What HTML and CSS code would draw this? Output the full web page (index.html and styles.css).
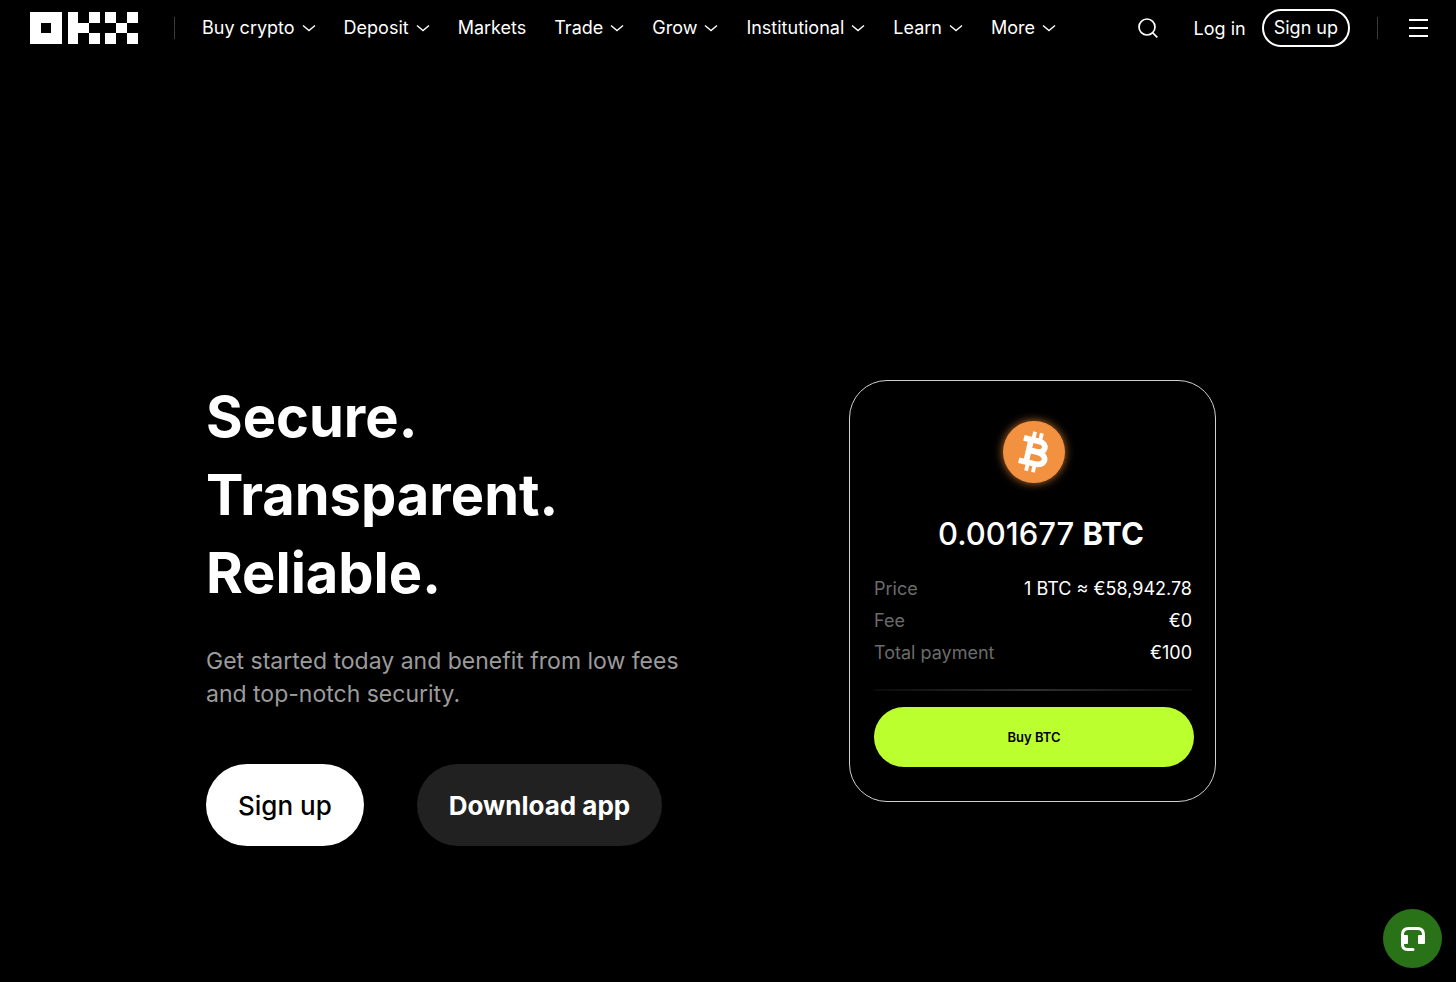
FILE: index.html
```html
<!DOCTYPE html>
<html lang="en">
<head>
  <meta charset="UTF-8">
  <meta name="viewport" content="width=device-width, initial-scale=1.0">
  <title>OKX</title>
  <link rel="stylesheet" href="styles.css">
</head>
<body>
  <svg width="0" height="0" class="symbols" aria-hidden="true">
    <symbol id="chevron" viewBox="0 0 14 14">
      <path d="M1 4.500 L7 9.500 L13 4.500" fill="none" stroke="currentColor" stroke-width="1.400"/>
    </symbol>
  </svg>

  <header class="header">
    <a href="#" class="logo" aria-label="OKX">
      <svg viewBox="0 0 108 32" width="108" height="32" fill="#fff" shape-rendering="crispEdges">
        <path fill-rule="evenodd" d="M0 0h32v32H0z M11 11v10h10V11z"/>
        <path d="M38 0h10v11h11v10H48v11H38z M59 0h11v11H59z M59 21h11v11H59z"/>
        <path d="M75 0h11v11H75z M97 0h11v11H97z M86 11h11v10H86z M75 21h11v11H75z M97 21h11v11H97z"/>
      </svg>
    </a>
    <span class="divider"></span>
    <nav class="nav">
      <button type="button" class="nav-item">Buy crypto <svg class="chevron"><use href="#chevron"/></svg></button>
      <button type="button" class="nav-item">Deposit <svg class="chevron"><use href="#chevron"/></svg></button>
      <a href="#" class="nav-item">Markets</a>
      <button type="button" class="nav-item">Trade <svg class="chevron"><use href="#chevron"/></svg></button>
      <button type="button" class="nav-item">Grow <svg class="chevron"><use href="#chevron"/></svg></button>
      <button type="button" class="nav-item">Institutional <svg class="chevron"><use href="#chevron"/></svg></button>
      <button type="button" class="nav-item">Learn <svg class="chevron"><use href="#chevron"/></svg></button>
      <button type="button" class="nav-item">More <svg class="chevron"><use href="#chevron"/></svg></button>
    </nav>
    <div class="actions">
      <button type="button" class="icon-btn search" aria-label="Search">
        <svg viewBox="0 0 20 20" width="20" height="20" fill="none" stroke="#fff" stroke-width="1.700">
          <circle cx="9" cy="9" r="8"/>
          <path d="M14.800 14.800 L19.300 19.300"/>
        </svg>
      </button>
      <a href="#" class="login">Log in</a>
      <a href="#" class="signup">Sign up</a>
      <span class="divider"></span>
      <button type="button" class="icon-btn menu" aria-label="Menu">
        <svg viewBox="0 0 20 20" width="20" height="20" fill="#fff">
          <path d="M1 1h19v2H1z M1 9h19v2H1z M1 17h19v2H1z"/>
        </svg>
      </button>
    </div>
  </header>

  <main class="hero">
    <section class="intro">
      <h1>Secure.<br>Transparent.<br>Reliable.</h1>
      <p>Get started today and benefit from low fees<br>and top-notch security.</p>
      <div class="cta">
        <button type="button" class="btn btn-light">Sign up</button>
        <button type="button" class="btn btn-dark">Download app</button>
      </div>
    </section>

    <section class="card">
      <div class="coin">
        <svg viewBox="0 0 62 62" width="62" height="62" aria-hidden="true">
          <g transform="rotate(13 31 31)" fill="none" stroke="#fff">
            <path d="M18 19.500 H33.500 C43 19.500 43 30.300 33.500 30.300 H26 M33.500 30.300 C46 30.300 46 42.500 34.500 42.500 H18 M25.500 19.500 V42.500" stroke-width="5.800"/>
            <path d="M27.500 11v8 M34.500 11v8 M27.500 43v8 M34.500 43v8" stroke-width="3.800"/>
          </g>
        </svg>
      </div>
      <div class="amount">0.001677 <b>BTC</b></div>
      <dl class="details">
        <div><dt>Price</dt><dd>1 BTC ≈ €58,942.78</dd></div>
        <div><dt>Fee</dt><dd>€0</dd></div>
        <div><dt>Total payment</dt><dd>€100</dd></div>
      </dl>
      <button type="button" class="buy">Buy BTC</button>
    </section>
  </main>

  <button type="button" class="support" aria-label="Support">
    <svg viewBox="0 0 26 26" width="26" height="26" aria-hidden="true">
      <path d="M2.500 10 V8.500 Q2.500 2.500 8.500 2.500 H17.500 Q23.500 2.500 23.500 8.500 V10 M2.500 16 V18.500 Q2.500 23.500 7.500 23.500 H13" fill="none" stroke="#fff" stroke-width="3" stroke-linecap="round"/>
      <path d="M1 9h6q1 0 1 1v7q0 1-1 1H1z M19 9h6v8q0 1-1 1h-5q-1 0-1-1v-7q0-1 1-1z" fill="#fff"/>
    </svg>
  </button>
</body>
</html>
```
FILE: styles.css
```css
* {
  box-sizing: border-box;
}

body {
  margin: 0;
  min-height: 100vh;
  background: #000;
  color: #fff;
  font-family: Inter, "Liberation Sans", sans-serif;
}

button {
  padding: 0;
  border: none;
  background: none;
  color: inherit;
  font-family: inherit;
  cursor: pointer;
}

a {
  color: inherit;
  text-decoration: none;
}

.symbols {
  position: absolute;
}

/* header */
.header {
  display: flex;
  align-items: center;
  height: 56px;
  padding: 0 28px 0 30px;
  font-size: 18px;
}

.logo {
  display: flex;
  margin-right: 36px;
}

.divider {
  width: 1px;
  height: 22px;
  background: #3a3a3a;
}

.nav {
  display: flex;
  gap: 28px;
  margin-left: 27px;
}

.nav-item {
  display: flex;
  align-items: center;
  gap: 7px;
  font-size: 18px;
  line-height: 24px;
  white-space: nowrap;
}

.chevron {
  width: 14px;
  height: 14px;
}

.actions {
  display: flex;
  align-items: center;
  margin-left: auto;
  white-space: nowrap;
}

.icon-btn {
  display: flex;
}

.search {
  margin-right: 36px;
}

.login {
  margin-right: 16px;
}

.signup {
  padding: 0 10px;
  border: 2px solid #fff;
  border-radius: 19px;
  line-height: 34px;
}

.actions .divider {
  margin: 0 30px 0 27px;
}

/* hero */
.hero {
  display: flex;
  align-items: flex-start;
  justify-content: space-between;
  gap: 40px;
  padding: 322px 240px 60px 206px;
}

h1 {
  margin: 0;
  font-size: 56px;
  line-height: 78px;
  font-weight: 700;
}

.intro p {
  margin: 33px 0 53px;
  color: #9b9b9b;
  font-size: 23px;
  line-height: 33px;
}

.cta {
  display: flex;
  gap: 53px;
}

.btn {
  height: 82px;
  padding: 0 32px;
  border-radius: 41px;
  font-size: 26px;
  white-space: nowrap;
}

.btn-light {
  background: #fff;
  color: #000;
  font-weight: 500;
}

.btn-dark {
  background: #212121;
  font-weight: 700;
}

/* quote card */
.card {
  flex: 0 0 367px;
  margin-top: 2px;
  padding: 40px 21px 34px 24px;
  border: 1px solid #d0d0d0;
  border-radius: 38px;
}

.coin {
  width: 62px;
  height: 62px;
  margin: 0 auto;
  border-radius: 50%;
  background: #f29140;
  box-shadow: 0 0 10px rgba(242, 145, 64, 0.8);
}

.amount {
  margin-top: 29px;
  padding-left: 14px;
  font-size: 31px;
  line-height: 44px;
  font-weight: 500;
  text-align: center;
  white-space: nowrap;
}

.details {
  margin: 17px 2px 0 0;
  padding-bottom: 20px;
  border-bottom: 2px solid;
  border-image: linear-gradient(90deg, #0a0a0a, #303030, #0a0a0a) 1;
  font-size: 18px;
  line-height: 32px;
}

.details div {
  display: flex;
  justify-content: space-between;
}

.details dt {
  color: #6b6b6b;
}

.details dd {
  margin: 0;
}

.buy {
  display: block;
  width: 100%;
  height: 60px;
  margin-top: 16px;
  border-radius: 30px;
  background: #bcff2f;
  color: #000;
  font-size: 13px;
  font-weight: 600;
}

/* floating support button */
.support {
  position: fixed;
  right: 14px;
  bottom: 14px;
  display: flex;
  align-items: center;
  justify-content: center;
  width: 59px;
  height: 59px;
  border-radius: 50%;
  background: #2a7217;
}
```
